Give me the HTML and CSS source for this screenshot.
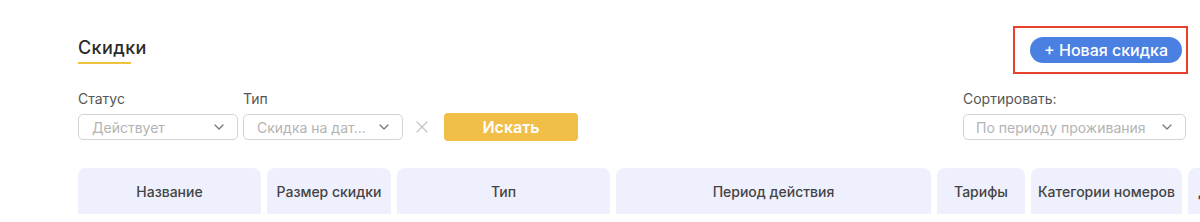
FILE: index.html
```html
<!DOCTYPE html>
<html lang="ru">
<head>
<meta charset="utf-8">
<link rel="stylesheet" href="styles.css">
</head>
<body>
<div class="page">
  <div class="top">
    <div class="title-wrap">
      <h1 class="title">Скидки</h1>
      <div class="title-line"></div>
    </div>
    <div class="highlight">
      <button class="btn-new">+ Новая скидка</button>
    </div>
  </div>

  <div class="filters">
    <div class="field field-status">
      <div class="label">Статус</div>
      <div class="select">
        <span class="select-text">Действует</span>
        <svg class="chev" viewBox="0 0 10 6" width="10" height="6"><path d="M1 1l4 4 4-4" fill="none" stroke="#777" stroke-width="1.3" stroke-linecap="round" stroke-linejoin="round"/></svg>
      </div>
    </div>
    <div class="field field-type">
      <div class="label">Тип</div>
      <div class="select">
        <span class="select-text">Скидка на дат...</span>
        <svg class="chev" viewBox="0 0 10 6" width="10" height="6"><path d="M1 1l4 4 4-4" fill="none" stroke="#777" stroke-width="1.3" stroke-linecap="round" stroke-linejoin="round"/></svg>
      </div>
    </div>
    <svg class="clear" viewBox="0 0 12 12" width="12" height="12"><path d="M1 1l10 10M11 1L1 11" stroke="#c4c4c4" stroke-width="1.2" stroke-linecap="round"/></svg>
    <button class="btn-search">Искать</button>
    <div class="spacer"></div>
    <div class="field field-sort">
      <div class="label">Сортировать:</div>
      <div class="select">
        <span class="select-text">По периоду проживания</span>
        <svg class="chev" viewBox="0 0 10 6" width="10" height="6"><path d="M1 1l4 4 4-4" fill="none" stroke="#777" stroke-width="1.3" stroke-linecap="round" stroke-linejoin="round"/></svg>
      </div>
    </div>
  </div>

  <div class="thead">
    <div class="th">Название</div>
    <div class="th">Размер скидки</div>
    <div class="th">Тип</div>
    <div class="th">Период действия</div>
    <div class="th">Тарифы</div>
    <div class="th">Категории номеров</div>
    <div class="th th-last">Действия</div>
  </div>
</div>
</body>
</html>
```

FILE: styles.css
```css
* { box-sizing: border-box; }
html, body { margin: 0; padding: 0; background: #fff; }
body {
  font-family: Inter, "Noto Sans", "Liberation Sans", sans-serif;
  color: #333;
  width: 1200px;
  height: 222px;
  overflow: hidden;
}
.page {
  padding: 26px 12px 0 78px;
  width: 1200px;
}
.top {
  display: flex;
  justify-content: space-between;
  align-items: flex-start;
  height: 48px;
}
.title-wrap { padding-top: 11px; }
.title {
  margin: 0;
  font-size: 18px;
  line-height: 22px;
  font-weight: 500;
  color: #2b2b2b;
  letter-spacing: 0.4px;
}
.title-line {
  width: 53px;
  height: 2px;
  background: #f2c13f;
  margin-top: 3px;
}
.highlight {
  border: 2px solid #e8412c;
  padding: 9px 4px 9px 15px;
}
.btn-new {
  display: block;
  width: 152px;
  height: 26px;
  border: none;
  border-radius: 13px;
  background: #4a80e2;
  color: #fff;
  font-family: inherit;
  font-size: 16px;
  font-weight: 500;
  padding: 0;
  line-height: 26px;
  cursor: pointer;
}
.filters {
  display: flex;
  align-items: flex-end;
  margin-top: 16px;
}
.field { display: flex; flex-direction: column; }
.label {
  font-size: 14px;
  line-height: 18px;
  color: #555;
  margin-bottom: 6px;
}
.select {
  display: flex;
  align-items: center;
  justify-content: space-between;
  height: 26px;
  border: 1px solid #d3d3d3;
  border-radius: 5px;
  padding: 0 13px 0 13px;
  background: #fff;
}
.select-text {
  font-size: 14px;
  color: #b3b3b3;
  white-space: nowrap;
}
.chev { flex: none; }
.field-status { width: 160px; }
.field-type { width: 160px; margin-left: 5px; }
.field-sort { width: 223px; margin-right: 2px; }
.field-sort .select { padding-left: 12px; }
.clear { margin: 0 0 7px 13px; flex: none; }
.btn-search {
  margin-left: 16px;
  width: 134px;
  height: 28px;
  margin-bottom: -1px;
  border: none;
  border-radius: 4px;
  background: #f1bf47;
  color: #fff;
  font-family: inherit;
  font-size: 16px;
  font-weight: 600;
  padding: 0;
}
.spacer { flex: 1; }
.thead {
  display: grid;
  grid-template-columns: 183px 124px 213px 315px 88px 151px 120px;
  column-gap: 6px;
  margin-top: 28px;
  width: 1300px;
}
.th {
  height: 46px;
  background: #eff0fd;
  border-radius: 8px 8px 0 0;
  display: flex;
  align-items: center;
  justify-content: center;
  font-size: 14px;
  font-weight: 500;
  color: #444;
  white-space: nowrap;
}
.th-last { justify-content: flex-start; padding-left: 10px; }
```
